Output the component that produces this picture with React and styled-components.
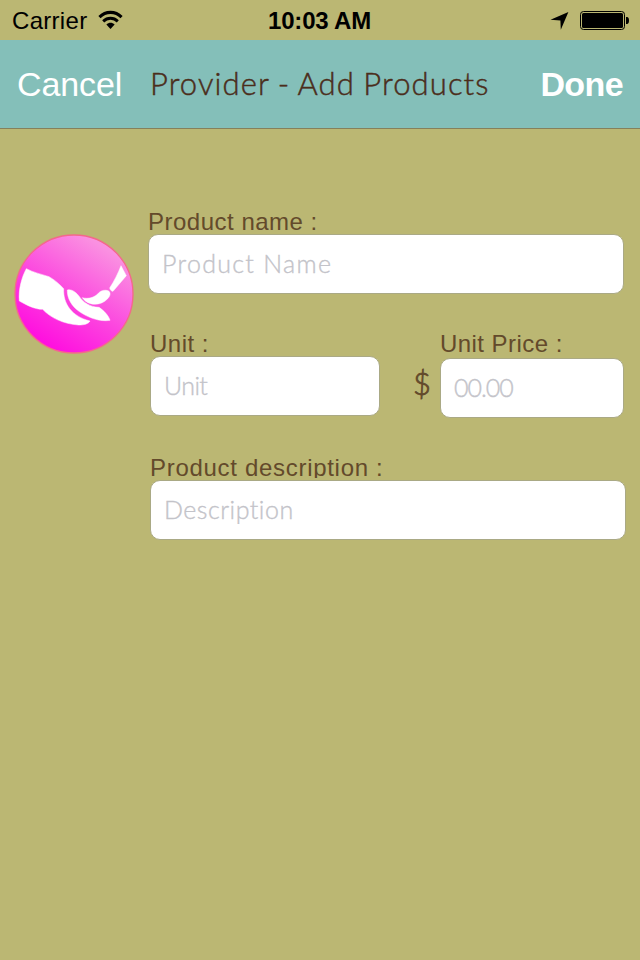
import React from "react";
import styled, { createGlobalStyle } from "styled-components";

const GlobalStyle = createGlobalStyle`
  * { box-sizing: border-box; }
  body { margin: 0; background: #bbb773; font-family: "Liberation Sans", Arial, sans-serif; }
`;

const Screen = styled.div`
  width: 640px;
  height: 960px;
  overflow: hidden;
  background: #bbb773;
`;

const StatusBar = styled.header`
  display: grid;
  grid-template-columns: 1fr auto 1fr;
  align-items: center;
  height: 40px;
  padding: 0 11px 0 12px;
  color: #000;
  font-size: 24px;
  line-height: 40px;
`;

const StatusGroup = styled.div`
  display: flex;
  align-items: center;
  justify-content: ${(p) => (p.$end ? "flex-end" : "flex-start")};
  gap: 11px;
  letter-spacing: 0.3px;
`;

const StatusText = styled.span`
  height: 40px;
  line-height: 42px;
`;

const Clock = styled.time`
  height: 40px;
  margin-right: 2px;
  font-weight: 700;
  line-height: 42px;
  letter-spacing: -0.2px;
`;

const NavBar = styled.nav`
  display: flex;
  align-items: center;
  height: 89px;
  padding: 0 17px;
  background: #84bfb9;
  border-bottom: 1px solid #85805b;
`;

const NavButton = styled.button`
  width: ${(p) => p.$width}px;
  padding: 0;
  border: 0;
  background: none;
  color: #fff;
  font-family: "Liberation Sans", Arial, sans-serif;
  font-size: 34px;
  line-height: 40px;
  font-weight: ${(p) => (p.$strong ? 700 : 400)};
  letter-spacing: ${(p) => (p.$strong ? -0.6 : -0.1)}px;
  text-align: ${(p) => (p.$strong ? "right" : "left")};
  white-space: nowrap;
`;

const Title = styled.h1`
  flex: 1;
  margin: 0 0 2px;
  color: #4b2d1b;
  font-family: Lato, sans-serif;
  font-size: 31px;
  line-height: 40px;
  font-weight: 300;
  letter-spacing: 1.1px;
  word-spacing: -1.2px;
  -webkit-text-stroke: 0.45px currentColor;
  white-space: nowrap;
`;

const Form = styled.form`
  display: flex;
  align-items: flex-start;
  padding: 81px 14px 0 14px;
`;

const Avatar = styled.svg`
  display: block;
  flex: none;
  width: 120px;
  height: 120px;
  margin: 24px 14px 0 0;
`;

const Fields = styled.div`
  flex: none;
  width: 478px;
`;

const Row = styled.div`
  display: flex;
  align-items: flex-start;
  margin-top: ${(p) => p.$top || 0}px;
  padding-left: ${(p) => p.$indent || 0}px;
`;

const Field = styled.label`
  display: block;
  width: ${(p) => p.$width}px;
`;

const Label = styled.span`
  display: block;
  height: ${(p) => (p.$clip ? 22 : 24)}px;
  margin-bottom: ${(p) => (p.$clip ? 2 : p.$gap || 0)}px;
  overflow: ${(p) => (p.$clip ? "hidden" : "visible")};
  color: #634a2b;
  font-size: 24px;
  line-height: 24px;
  letter-spacing: ${(p) => p.$track}px;
  white-space: nowrap;
`;

const Input = styled.input`
  display: block;
  width: 100%;
  height: 60px;
  margin: 0;
  padding: 0 13px 3px;
  border: 1px solid #aaa985;
  border-radius: 10px;
  outline: 0;
  background: #fff;
  color: #4b2d1b;
  font-family: Lato, sans-serif;
  font-size: 25px;
  font-weight: 300;
  letter-spacing: ${(p) => p.$track}px;
  &::placeholder {
    color: #c3c3c9;
    opacity: 1;
    -webkit-text-stroke: 0.35px currentColor;
  }
`;

const Currency = styled.span`
  width: 60px;
  padding: 31px 9px 0 0;
  text-align: right;
  color: #634a2b;
  font-family: Lato, sans-serif;
  font-size: 31px;
  font-weight: 300;
  line-height: 40px;
  -webkit-text-stroke: 0.8px currentColor;
`;

function Wifi() {
  return (
    <svg width="25" height="20" viewBox="0 0 26 20" preserveAspectRatio="none" fill="none" stroke="#000">
      <path d="M1.5 7.1C8 .8 18 .8 24.5 7.1" strokeWidth="3.2" />
      <path d="M5.4 11.4c4.3-4.1 10.9-4.1 15.2 0" strokeWidth="3" />
      <path d="M8.7 14.5c2.6-2.4 6-2.4 8.6 0L13 18.9Z" fill="#000" stroke="none" />
    </svg>
  );
}

function LocationArrow() {
  return (
    <svg width="19" height="20" viewBox="0 0 19 20">
      <path d="M18.4 2 10.8 19.8l-.4-9.3L.5 9.8Z" fill="#000" />
    </svg>
  );
}

function Battery() {
  return (
    <svg width="49" height="20" viewBox="0 0 49 20">
      <rect x=".5" y="1.5" width="44" height="18" rx="3" fill="none" stroke="#000" />
      <rect x="2" y="3" width="41" height="15" rx="1.5" fill="#000" />
      <path d="M46 7h1c1.3 0 2 1.2 2 3.5S48.3 14 47 14h-1Z" fill="#000" />
    </svg>
  );
}

function HandBadge() {
  return (
    <Avatar viewBox="30 29 360 360">
      <defs>
        <linearGradient id="pink" x1="0.25" y1="0.95" x2="0.78" y2="0.12">
          <stop offset="0" stopColor="#ff0cdf" />
          <stop offset="0.45" stopColor="#fc43df" />
          <stop offset="1" stopColor="#fa91e1" />
        </linearGradient>
      </defs>
      <circle cx="210" cy="209" r="177" fill="url(#pink)" stroke="#f4688c" strokeWidth="4" />
      <g fill="#fff" stroke="#fff" strokeWidth="1.5">
        <path d="M67 133C87 144 111 149 135 157C153 167 167 180 179 193C177 238 203 276 258 290C253 299 240 302 224 302C178 299 139 280 116 255C91 255 68 242 46 230C43 195 53 159 67 133Z" />
        <path d="M190 197C202 194 214 202 224 214C238 235 258 248 285 249C300 259 314 274 318 288C287 293 252 280 225 261C203 245 189 222 190 197Z" />
        <path d="M235 220C252 225 271 220 283 207C292 196 308 196 315 201C321 207 318 216 311 223C296 239 276 242 260 238C248 235 241 228 235 220Z" />
        <path d="M351 124L367 154L327 201C323 201 318 197 317 191C331 169 342 148 351 124Z" />
      </g>
    </Avatar>
  );
}

export default function App() {
  return (
    <Screen>
      <GlobalStyle />
      <StatusBar>
        <StatusGroup>
          <StatusText>Carrier</StatusText>
          <Wifi />
        </StatusGroup>
        <Clock>10:03 AM</Clock>
        <StatusGroup $end>
          <LocationArrow />
          <Battery />
        </StatusGroup>
      </StatusBar>
      <NavBar>
        <NavButton type="button" $width={133}>Cancel</NavButton>
        <Title>Provider - Add Products</Title>
        <NavButton type="button" $width={90} $strong>Done</NavButton>
      </NavBar>
      <Form>
        <HandBadge />
        <Fields>
          <Row>
            <Field $width={476}>
              <Label $track={0.5}>Product name :</Label>
              <Input placeholder="Product Name" $track={1.3} />
            </Field>
          </Row>
          <Row $top={38} $indent={2}>
            <Field $width={230}>
              <Label $track={0.5}>Unit :</Label>
              <Input placeholder="Unit" $track={-0.6} />
            </Field>
            <Currency>$</Currency>
            <Field $width={184}>
              <Label $track={0.45} $gap={2}>Unit Price :</Label>
              <Input placeholder="00.00" $track={-1} />
            </Field>
          </Row>
          <Row $top={38} $indent={2}>
            <Field $width={476}>
              <Label $track={0.7} $clip>Product description :</Label>
              <Input placeholder="Description" $track={0.5} />
            </Field>
          </Row>
        </Fields>
      </Form>
    </Screen>
  );
}
